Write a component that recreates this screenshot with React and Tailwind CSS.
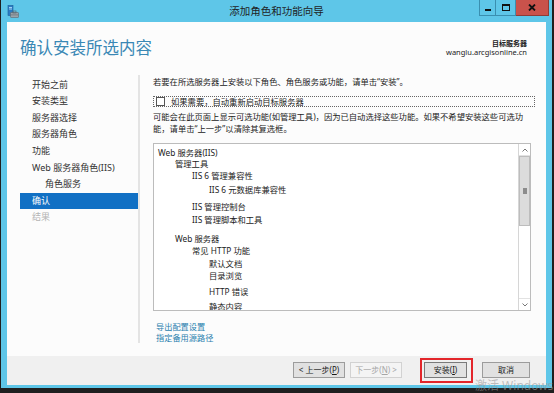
import React from 'react';

// Left navigation steps
const steps = [
  { label: '开始之前', cls: 'pl-[12px] text-[#333]' },
  { label: '安装类型', cls: 'pl-[12px] text-[#333]' },
  { label: '服务器选择', cls: 'pl-[12px] text-[#333]' },
  { label: '服务器角色', cls: 'pl-[12px] text-[#333]' },
  { label: '功能', cls: 'pl-[12px] text-[#333]' },
  { label: 'Web 服务器角色(IIS)', cls: 'pl-[12px] text-[#333]' },
  { label: '角色服务', cls: 'pl-[25px] text-[#333]' },
  { label: '确认', cls: 'pl-[12px] text-white bg-[#1170c4]' },
  { label: '结果', cls: 'pl-[12px] text-[#b4b4b4]' },
];

// Items shown in the confirmation list
const features = [
  { label: 'Web 服务器(IIS)', cls: 'pl-[4px]' },
  { label: '管理工具', cls: 'pl-[21px] mt-[-1px]' },
  { label: 'IIS 6 管理兼容性', cls: 'pl-[38px]' },
  { label: 'IIS 6 元数据库兼容性', cls: 'pl-[55px] mt-[2px]' },
  { label: 'IIS 管理控制台', cls: 'pl-[38px] mt-[5px]' },
  { label: 'IIS 管理脚本和工具', cls: 'pl-[38px] mt-[1px]' },
  { label: 'Web 服务器', cls: 'pl-[21px] mt-[7px]' },
  { label: '常见 HTTP 功能', cls: 'pl-[38px]' },
  { label: '默认文档', cls: 'pl-[55px] mt-[1px]' },
  { label: '目录浏览', cls: 'pl-[55px]' },
  { label: 'HTTP 错误', cls: 'pl-[55px] mt-[4px]' },
  { label: '静态内容', cls: 'pl-[55px] mt-[3px]' },
];

const ServerIcon = () => (
  <svg width="12" height="13" viewBox="0 0 12 13">
    <rect x="1" y="0.5" width="5" height="10" fill="#2b7dc4" stroke="#1b5e9a" strokeWidth="0.6" />
    <rect x="2" y="2" width="3" height="0.8" fill="#bfe3ff" />
    <rect x="2" y="3.6" width="3" height="0.8" fill="#bfe3ff" />
    <rect x="3.5" y="7.5" width="8" height="5" rx="0.6" fill="#9aa3ab" stroke="#5e666d" strokeWidth="0.6" />
    <rect x="6" y="6" width="3" height="2" fill="none" stroke="#5e666d" strokeWidth="0.7" />
    <rect x="3.8" y="9.5" width="7.4" height="0.8" fill="#6f777e" />
  </svg>
);

const TitleBar = () => (
  <div className="h-[22px] grid grid-cols-[1fr_auto_1fr] items-start">
    <div className="pt-[5px]">
      <ServerIcon />
    </div>
    <div className="pt-[4px] text-[10.5px] leading-[14px] text-[#1e1e1e]">添加角色和功能向导</div>
    <div className="flex justify-end mr-[-3px]">
      <div className="w-[17px] h-[16px] border border-[#3a8fb0] border-t-0 flex items-end justify-center pb-[4px]">
        <div className="w-[6px] h-[2px] bg-[#111]" />
      </div>
      <div className="w-[20px] h-[16px] border border-[#3a8fb0] border-t-0 border-l-0 flex items-center justify-center">
        <div className="w-[8px] h-[7px] border border-[#111] border-t-2" />
      </div>
      <div className="w-[33px] h-[16px] bg-[#c9524b] border border-[#8f3b36] border-t-0 border-l-0 flex items-center justify-center">
        <svg width="8" height="7" viewBox="0 0 8 7">
          <path d="M1 0.5 L7 6.5 M7 0.5 L1 6.5" stroke="#111" strokeWidth="1.8" />
        </svg>
      </div>
    </div>
  </div>
);

const Button = ({ children, cls }) => (
  <div className={`h-[16px] flex items-center justify-center text-[8px] leading-[10px] border ${cls}`}>
    {children}
  </div>
);

const App = () => {
  return (
    <div className="w-[554px] h-[393px] bg-[#1f1f1f] pl-px overflow-hidden relative font-['Noto_Sans','Noto_Sans_CJK_SC',sans-serif]">
      <div className="w-[551px] h-[388px] bg-[#5ec6e8] flex flex-col px-[6px]">
        <TitleBar />

        {/* Content */}
        <div className="h-[334px] bg-[#fcfcfc] flex flex-col">
          <div className="h-[53px] flex justify-between items-start">
            <div className="pl-[13px] pt-[16px] text-[16.5px] leading-[20px] text-[#3a88b5]">确认安装所选内容</div>
            <div className="pr-[19px] pt-[17px] flex flex-col items-end text-[#222]">
              <div className="text-[7px] leading-[9px] font-bold">目标服务器</div>
              <div className="text-[7.5px] leading-[9px]">wanglu.arcgisonline.cn</div>
            </div>
          </div>

          <div className="h-[268px] flex">
            {/* Steps */}
            <div className="w-[133px] pl-[13px] pt-[1.7px] border-r-2 border-[#e4e4e4]">
              {steps.map((s) => (
                <div key={s.label} className={`h-[16.6px] leading-[16.6px] text-[9px] whitespace-nowrap ${s.cls}`}>
                  {s.label}
                </div>
              ))}
            </div>

            {/* Main */}
            <div className="flex-1 pl-[13px] pr-[11px] pt-[1px] text-[8.3px] text-[#222]">
              <div className="leading-[12px] whitespace-nowrap">若要在所选服务器上安装以下角色、角色服务或功能，请单击“安装”。</div>

              <div className="mt-[8px] h-[11px] border border-dotted border-[#666] flex items-center pl-[2px]">
                <div className="w-[9px] h-[9px] border border-[#555] bg-white" />
                <div className="ml-[6px] leading-[10px] whitespace-nowrap">如果需要，自动重新启动目标服务器</div>
              </div>

              <div className="mt-[3.5px] leading-[12.4px] whitespace-nowrap">
                可能会在此页面上显示可选功能(如管理工具)，因为已自动选择这些功能。如果不希望安装这些可选功
                <br />
                能，请单击“上一步”以清除其复选框。
              </div>

              <div className="mt-[7.7px] w-[378px] h-[168px] border border-[#bcbcbc] bg-white flex overflow-hidden">
                <div className="flex-1 pt-[3px] overflow-hidden">
                  {features.map((f) => (
                    <div key={f.label} className={`h-[12px] leading-[12px] text-[8.3px] whitespace-nowrap ${f.cls}`}>
                      {f.label}
                    </div>
                  ))}
                </div>
                <div className="w-[12px] border-l border-[#d6d6d6] flex flex-col bg-white">
                  <div className="h-[12px] flex items-center justify-center border-b border-[#e2e2e2]">
                    <svg width="6" height="4" viewBox="0 0 6 4">
                      <path d="M0.5 3.5 L3 1 L5.5 3.5" fill="none" stroke="#777" strokeWidth="1" />
                    </svg>
                  </div>
                  <div className="h-[70px] bg-[#dcdcdc] border border-[#bdbdbd] flex items-center justify-center">
                    <div className="w-[4px] h-[6px] bg-[#8c8c8c]" />
                  </div>
                  <div className="flex-1" />
                  <div className="h-[12px] flex items-center justify-center border-t border-[#e2e2e2]">
                    <svg width="6" height="4" viewBox="0 0 6 4">
                      <path d="M0.5 0.5 L3 3 L5.5 0.5" fill="none" stroke="#777" strokeWidth="1" />
                    </svg>
                  </div>
                </div>
              </div>

              <div className="mt-[9.5px] ml-[3px] leading-[11px] text-[8.2px] text-[#2a7fae]">
                <div>导出配置设置</div>
                <div>指定备用源路径</div>
              </div>
            </div>
          </div>
        </div>

        {/* Footer */}
        <div className="h-[29px] bg-[#f0f0f0] flex justify-end items-start pt-[6px] pr-[16px]">
          <Button cls="w-[52px] mr-[5px] bg-[#e1e1e1] border-[#9c9c9c] text-[#1a1a1a]">
            &lt; 上一步(<u>P</u>)
          </Button>
          <Button cls="w-[52px] mr-[22px] bg-[#f4f4f4] border-[#d2d2d2] text-[#a6a6a6]">
            下一步(<u>N</u>) &gt;
          </Button>
          <div className="relative mr-[15px]">
            <Button cls="w-[43px] bg-[#e1e1e1] border-[#7a7a7a] text-[#1a1a1a]">
              安装(<u>I</u>)
            </Button>
            <div className="absolute -left-[4px] -right-[6px] -top-[4px] -bottom-[5px] border-2 border-[#e3262b]" />
          </div>
          <Button cls="w-[48px] bg-[#e1e1e1] border-[#9c9c9c] text-[#1a1a1a]">取消</Button>
        </div>
      </div>

      {/* Activation watermark */}
      <div className="absolute left-[475px] top-[379px] text-[12px] leading-[14px] text-[#9a9a9a]/60 whitespace-nowrap">
        激活 Windows
      </div>
    </div>
  );
};

export default App;
